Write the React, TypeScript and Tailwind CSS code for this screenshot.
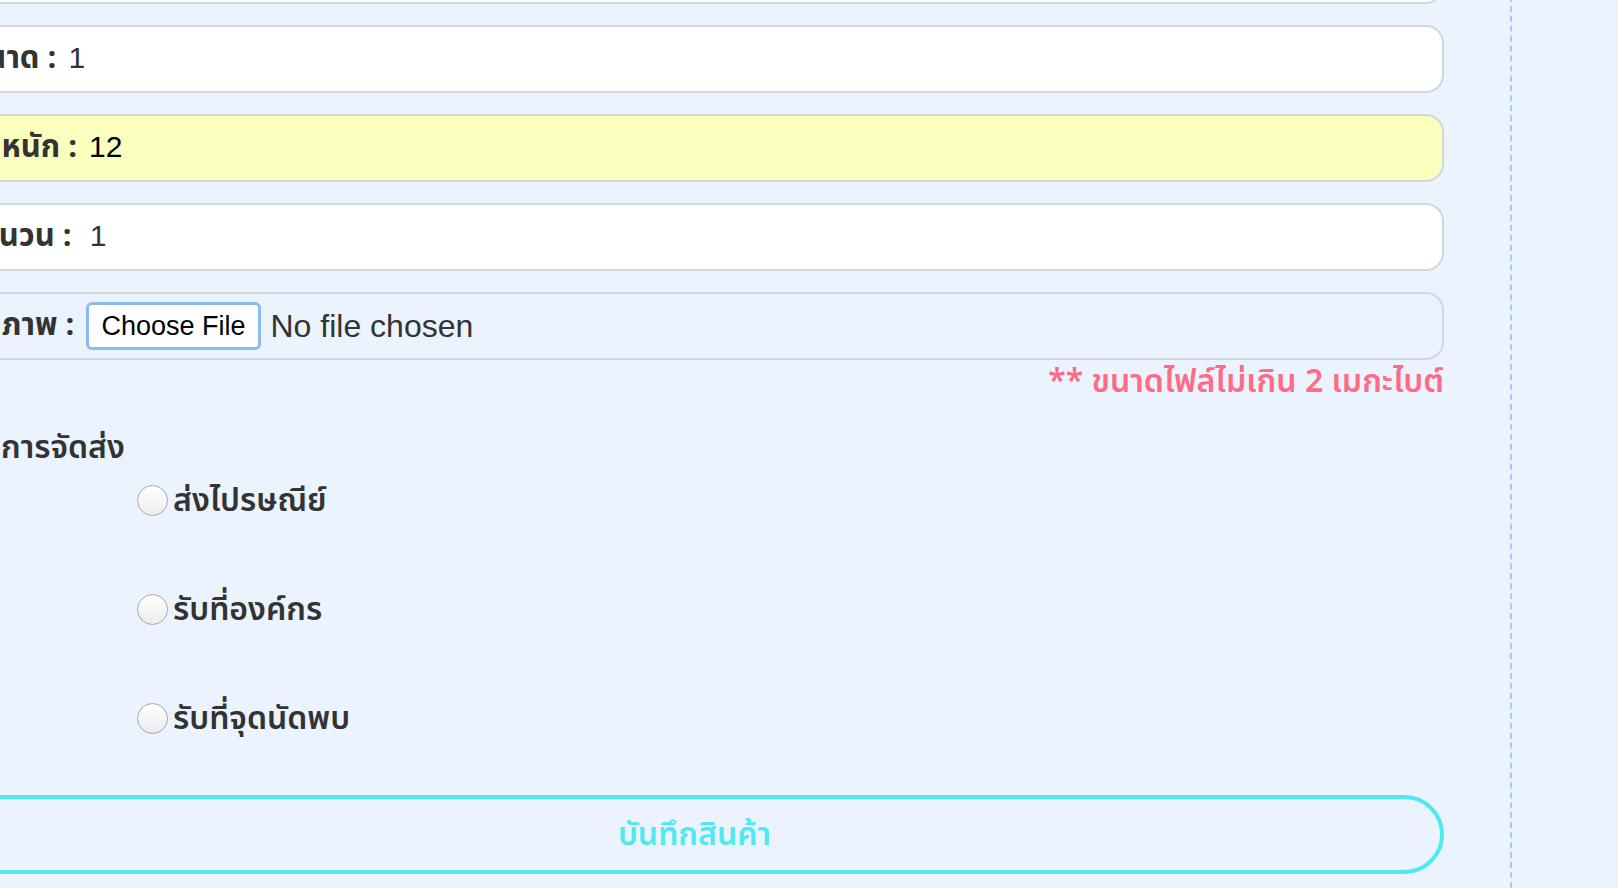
import React from "react";

const font = { fontFamily: '"Noto Sans Thai", "Noto Sans", "Liberation Sans", sans-serif' };
const latin = { fontFamily: '"Liberation Sans", "Noto Sans Thai", sans-serif' };

function Field({ label, value, bg = "bg-white", valueClass = "text-[#333]", gap = "ml-[12px]" }: { label: string; value: string; bg?: string; valueClass?: string; gap?: string }) {
  return (
    <div className={`flex h-[68px] items-center rounded-[18px] border-2 border-[#d3d7d9] pl-[21px] ${bg}`}>
      <span className="text-[31px] font-bold text-[#333]">{label} :</span>
      <span className={`${gap} -mt-[3px] text-[30px] ${valueClass}`} style={latin}>
        {value}
      </span>
    </div>
  );
}

function Radio({ label }: { label: string }) {
  return (
    <div className="flex h-[31px] items-center pl-[192px]">
      <span className="h-[31px] w-[31px] shrink-0 rounded-full border border-[#a8a8a8] bg-gradient-to-b from-white to-[#ececec]" />
      <span className="ml-[5px] text-[32px] font-semibold text-[#333]">{label}</span>
    </div>
  );
}

export default function App() {
  return (
    <div className="flex h-[888px] w-[1618px] overflow-hidden bg-[#ebf3fe]" style={font}>
      <div className="-ml-[55px] -mt-[64px] flex w-[1567px] shrink-0 flex-col border-r-2 border-dashed border-[#abc9f6] pr-[66px]">
        <div className="flex flex-col gap-[21px]">
          <Field label="ราคา" value="100" />
          <Field label="ขนาด" value="1" />
          <Field label="น้ำหนัก" value="12" bg="bg-[#faffbd]" valueClass="text-black" />
          <Field label="จำนวน" value="1" gap="ml-[18px]" />
          <div className="flex h-[68px] items-center rounded-[18px] border-2 border-[#d3d7d9] pl-[19px]">
            <span className="text-[31px] font-bold text-[#333]">รูปภาพ :</span>
            <span className="ml-[12px] rounded-[6px] border-[3px] border-[#8ebaf2] bg-white px-[12px] py-[1px] text-[27px] text-black" style={latin}>
              Choose File
            </span>
            <span className="ml-[10px] text-[32px] text-[#333]" style={latin}>
              No file chosen
            </span>
          </div>
        </div>
        <div className="mt-[4px] text-right text-[32px] font-semibold leading-[36px] text-[#ff6a86]">** ขนาดไฟล์ไม่เกิน 2 เมกะไบต์</div>
        <div className="mt-[30px] pl-[56px] text-[32px] font-semibold leading-[36px] text-[#333]">การจัดส่ง</div>
        <div className="mt-[19px] flex flex-col gap-[78px]">
          <Radio label="ส่งไปรษณีย์" />
          <Radio label="รับที่องค์กร" />
          <Radio label="รับที่จุดนัดพบ" />
        </div>
        <button className="mt-[61px] h-[79px] w-full shrink-0 rounded-full border-4 border-[#50e9f2] text-[32px] font-semibold text-[#50e9f2]">
          บันทึกสินค้า
        </button>
      </div>
    </div>
  );
}
